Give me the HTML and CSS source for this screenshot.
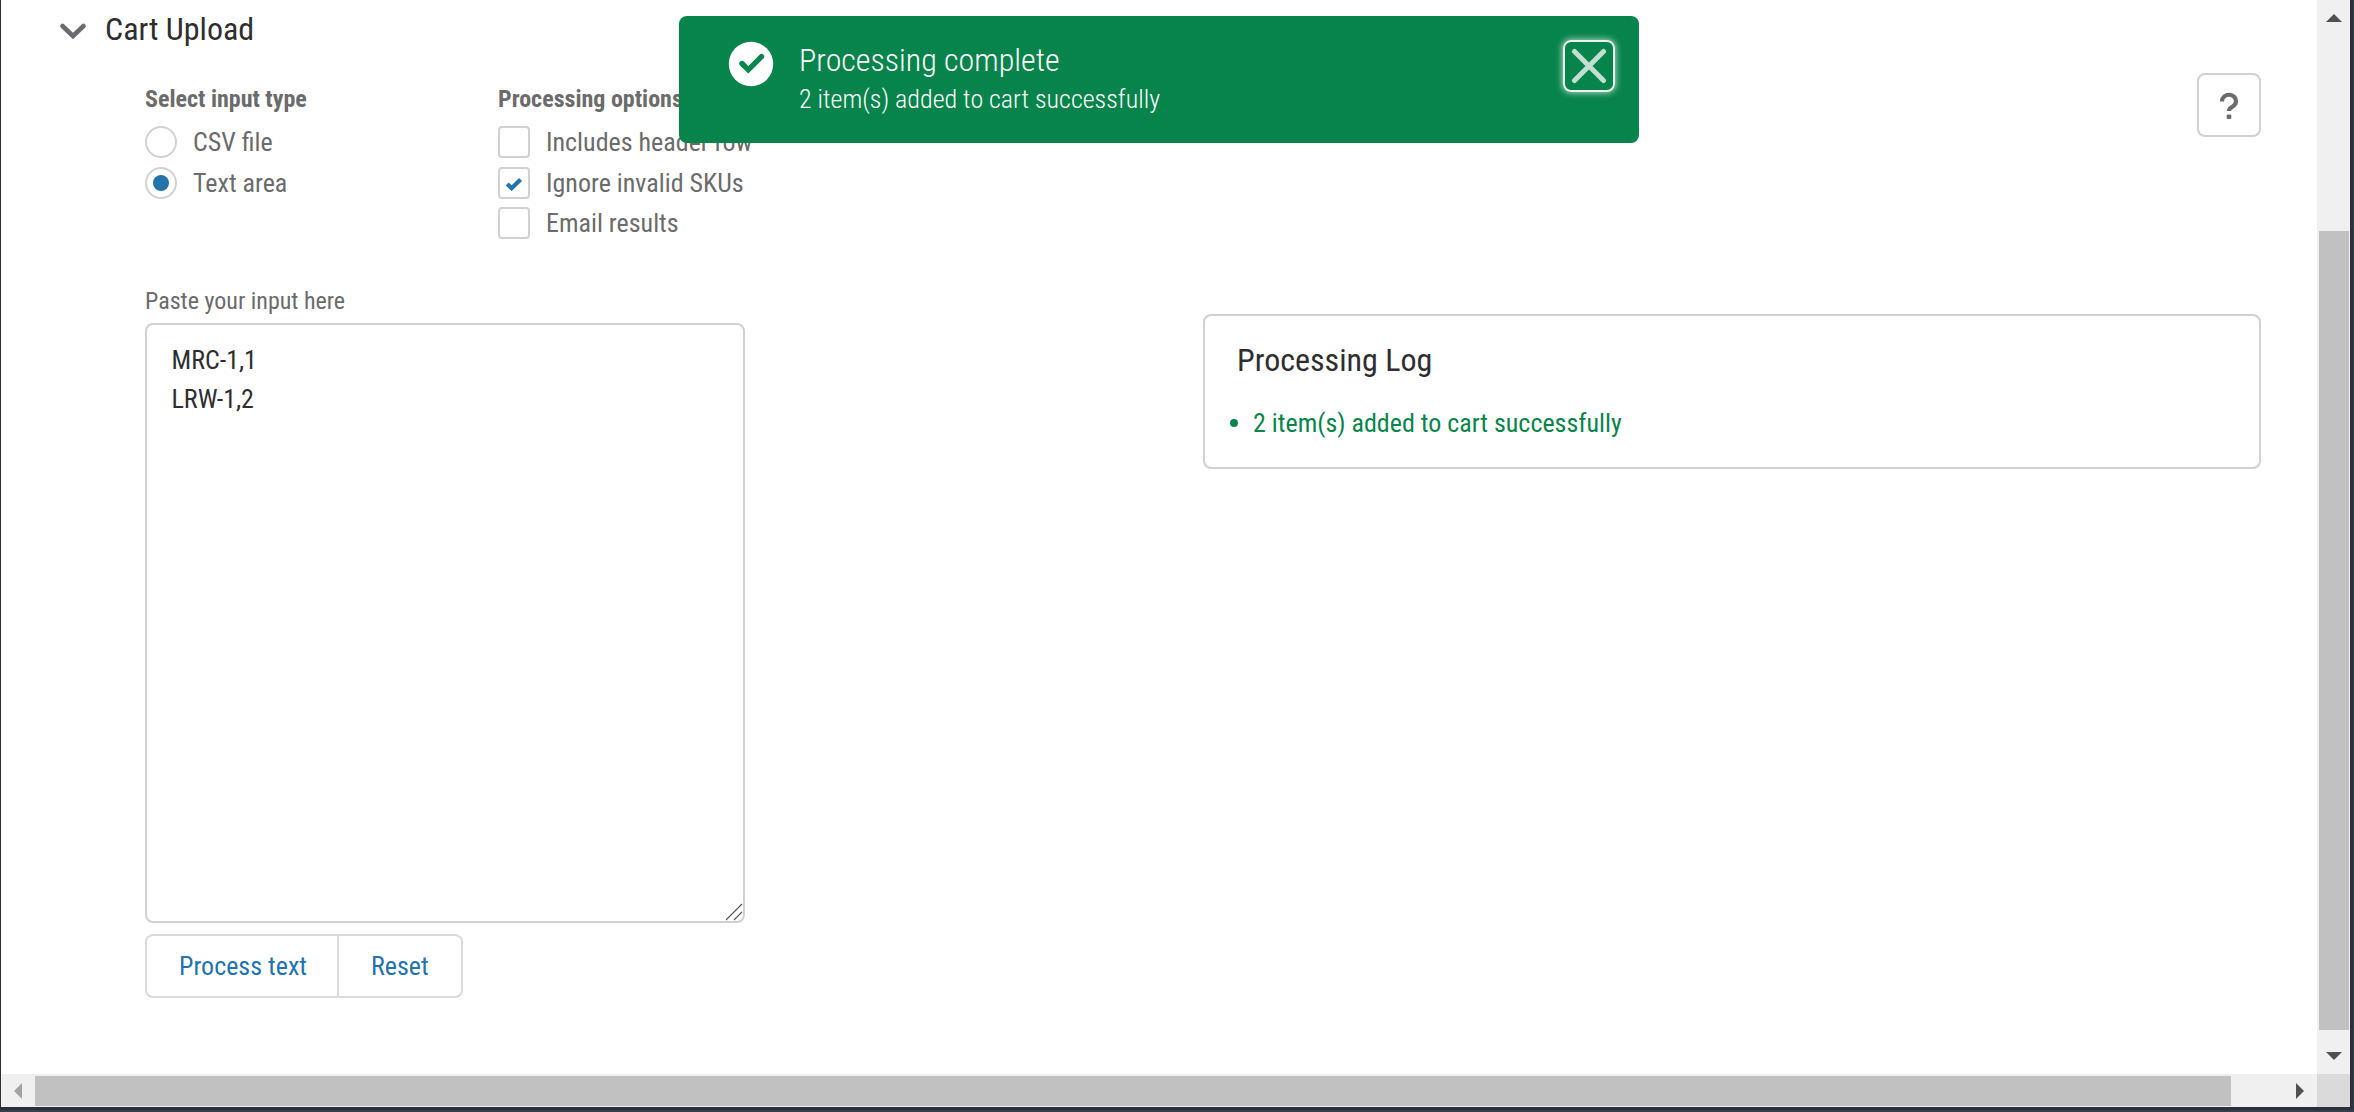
FILE: index.html
```html
<!DOCTYPE html>
<html lang="en">
<head>
<meta charset="utf-8">
<title>Cart Upload</title>
<link rel="stylesheet" href="styles.css">
</head>
<body>
<div class="window">
  <main class="page">
    <header class="section-head">
      <svg class="chevron" width="28" height="18" viewBox="0 0 28 18"><path d="M3.500 4 14 14 24.500 4" fill="none" stroke="#6b6c6f" stroke-width="4.600" stroke-linecap="round"/></svg>
      <h1 class="heading">Cart Upload</h1>
    </header>
    <div class="top-row">
      <fieldset class="group">
        <legend class="legend">Select input type</legend>
        <label class="choice"><span class="radio"></span>CSV file</label>
        <label class="choice"><span class="radio radio-on"></span>Text area</label>
      </fieldset>
      <fieldset class="group">
        <legend class="legend">Processing options</legend>
        <label class="choice"><span class="check"></span>Includes header row</label>
        <label class="choice"><span class="check"><svg class="tick" width="18" height="14" viewBox="0 0 18 14"><path d="M2.200 7 6.600 11.200 15.600 2.400" fill="none" stroke="#2373ac" stroke-width="4.200"/></svg></span>Ignore invalid SKUs</label>
        <label class="choice"><span class="check"></span>Email results</label>
      </fieldset>
      <button class="help" aria-label="Help"><svg class="help-icon" width="20" height="28" viewBox="0 0 20 28"><path d="M3 9.500V9a7 6.500 0 0 1 14 .5c0 3-2 4.300-4.500 5.800-1.700 1-2.500 1.900-2.500 3.700" fill="none" stroke="#6b6c6f" stroke-width="4.200"/><rect x="7.700" y="22.500" width="4.600" height="4.500" rx="1" fill="#6b6c6f"/></svg></button>
    </div>
    <div class="columns">
      <section class="entry">
        <div class="label">Paste your input here</div>
        <div class="textarea">
          <div class="line">MRC-1,1</div>
          <div class="line">LRW-1,2</div>
          <svg class="grip" width="18" height="18" viewBox="0 0 18 18"><path d="M1 17 17 1M9 17 17 9" stroke="#555" stroke-width="1.100"/></svg>
        </div>
        <div class="buttons">
          <button class="btn btn-first">Process text</button>
          <button class="btn btn-last">Reset</button>
        </div>
      </section>
      <section class="log">
        <h2 class="log-title">Processing Log</h2>
        <div class="log-item"><span class="bullet"></span>2 item(s) added to cart successfully</div>
      </section>
    </div>
    <div class="toast">
      <svg class="toast-icon" width="46" height="46" viewBox="0 0 46 46"><circle cx="23" cy="23" r="22.200" fill="#fff"/><path d="M14 22.500 20.300 28.800 33.500 15.700" fill="none" stroke="#07844b" stroke-width="5.400" stroke-linecap="round"/></svg>
      <div class="toast-text">
        <div class="toast-title">Processing complete</div>
        <div class="toast-sub">2 item(s) added to cart successfully</div>
      </div>
      <button class="close" aria-label="Close"><svg width="36" height="36" viewBox="0 0 36 36"><path d="M3.500 3.500 32.500 32.500M32.500 3.500 3.500 32.500" stroke="#c1e0d2" stroke-width="5" stroke-linecap="round"/></svg></button>
    </div>
  </main>
  <div class="vbar">
    <svg width="16" height="8"><path d="M0 8 8 0 16 8z" fill="#505050"/></svg>
    <div class="vthumb"></div>
    <svg width="16" height="8"><path d="M0 0 8 8 16 0z" fill="#505050"/></svg>
  </div>
  <div class="hbar">
    <svg width="8" height="16"><path d="M8 0 0 8 8 16z" fill="#a3a3a3"/></svg>
    <div class="hthumb"></div>
    <svg width="8" height="16"><path d="M0 0 8 8 0 16z" fill="#505050"/></svg>
  </div>
  <div class="corner"></div>
</div>
</body>
</html>
```
FILE: styles.css
```css
* { box-sizing: border-box; }
html, body { height: 100%; }
body {
  margin: 0;
  overflow: hidden;
  background: #363e4c;
  font-family: "Roboto Condensed", Roboto, sans-serif;
  font-stretch: 75%;
  font-size: 26px;
  color: #6b6b6b;
}
h1, h2 { margin: 0; font-weight: 400; }
button { font: inherit; background: #fff; padding: 0; }
svg { display: block; flex: none; }
.window {
  width: 2353px;
  height: 1110px;
  display: grid;
  grid-template: 1074px 33px / 2316px 33px;
  border: solid #2c303b;
  border-width: 0 3px 3px 1px;
}
.page { position: relative; background: #fff; overflow: hidden; }

.section-head { display: flex; padding: 9px 0 0 58px; height: 81px; }
.chevron { margin-top: 13px; }
.heading { margin-left: 18px; font-size: 32px; line-height: 40px; color: #2e2e30; }

.top-row { display: flex; height: 208px; padding-left: 144px; }
.group { border: 0; margin: 0; padding: 0; width: 353px; }
.legend { padding: 0; font-size: 24px; font-weight: 700; line-height: 36px; height: 41px; }
.choice { display: flex; align-items: center; height: 40.5px; gap: 16px; line-height: 40px; }
.radio, .check {
  width: 32px; height: 32px; border: 2px solid #d1d1d1; border-radius: 4px;
  display: flex; align-items: center; justify-content: center; flex: none;
}
.radio { border-radius: 50%; }
.radio-on::after { content: ""; width: 16px; height: 16px; border-radius: 50%; background: #2373ac; }
.tick { margin-top: 2px; }
.help {
  margin: -8px 56px 0 auto;
  width: 64px; height: 64px; border: 2px solid #d1d1d1; border-radius: 8px;
  display: flex; align-items: center; justify-content: center;
}
.help-icon { margin-top: 2px; }

.columns { display: flex; padding-left: 144px; gap: 458px; align-items: flex-start; }
.entry { width: 600px; }
.label { font-size: 24px; line-height: 24px; height: 34px; }
.textarea {
  position: relative; height: 600px; border: 2px solid #d1d1d1; border-radius: 8px;
  padding: 16px 24.5px; color: #2e2e30;
}
.line { line-height: 39px; }
.grip { position: absolute; right: 0; bottom: 0; }
.buttons { display: flex; margin-top: 11px; height: 64px; width: 318px; border: 2px solid #dadada; border-radius: 8px; }
.btn { border: 0; background: none; color: #2373ac; text-align: left; padding-left: 32px; }
.btn-first { width: 190px; }
.btn-last { flex: 1; border-left: 2px solid #dadada; }
.log {
  margin-top: 25px; width: 1058px; height: 155px; border: 2px solid #d1d1d1; border-radius: 8px;
  padding: 24px 32px;
}
.log-title { font-size: 32px; line-height: 40px; color: #2e2e30; }
.log-item { display: flex; align-items: center; height: 40px; margin: 23px 0 0 -7px; gap: 15px; color: #07844b; }
.bullet { width: 8px; height: 8px; border-radius: 50%; background: #07844b; }

.toast {
  position: absolute; left: 678px; top: 16px; width: 960px; height: 127px;
  display: flex; background: #07844b; border-radius: 8px; color: #fff; font-weight: 300;
  padding: 24px 24px 0 49px;
}
.toast-icon { margin-top: 1px; }
.toast-title { font-size: 32px; line-height: 40px; }
.toast-text { margin-left: 25px; }
.toast-sub { line-height: 38px; }
.close {
  margin-left: auto; width: 52px; height: 52px; border: 2px solid #eef1ef; border-radius: 8px;
  background: none; box-shadow: 0 0 6px 1px rgba(255,255,255,.65);
  display: flex; align-items: center; justify-content: center;
}

.vbar { background: #f0f0f0; display: flex; flex-direction: column; align-items: center; padding: 14px 0; }
.vthumb { width: 30px; height: 799px; margin: 209px 0 22px; background: #c1c1c1; }
.hbar { background: #f0f0f0; display: flex; align-items: center; padding-left: 13px; }
.hthumb { width: 2196px; height: 30px; margin: 0 65px 0 13px; background: #c1c1c1; }
.corner { background: #dadada; }
```
